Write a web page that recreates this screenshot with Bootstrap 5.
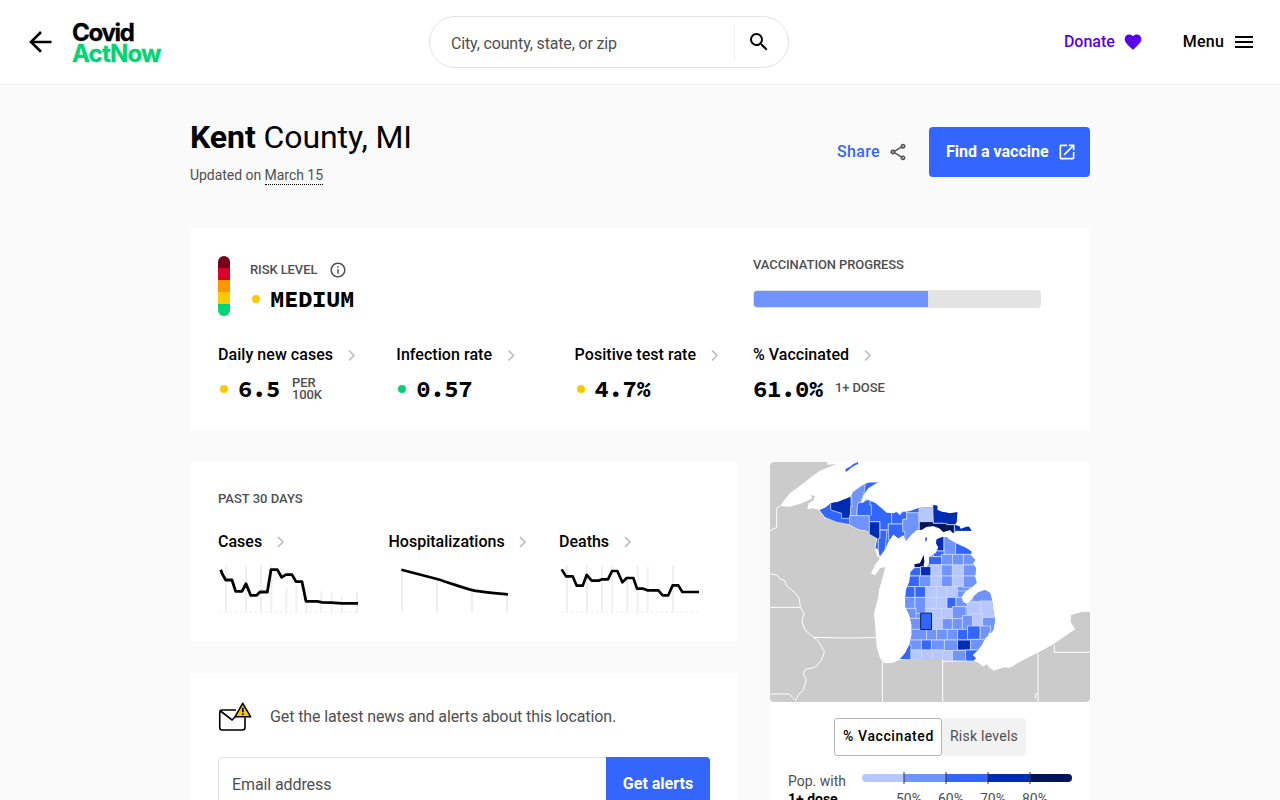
<!DOCTYPE html>
<html lang="en">
<head>
<meta charset="utf-8">
<meta name="viewport" content="width=device-width, initial-scale=1">
<title>Kent County, MI - Covid Act Now</title>
<link href="https://cdn.jsdelivr.net/npm/bootstrap@5.3.0/dist/css/bootstrap.min.css" rel="stylesheet">
<style>
body{font-family:Roboto,sans-serif;background:#fafafa;color:#000;font-size:16px;line-height:24px;height:800px;overflow:hidden}
svg{display:block;flex:none}
.topbar{height:85px;border-bottom:1px solid #f0f0f0}
.brand-side{width:429px;padding-left:28px}
.searchbox{width:360px;height:52px;border:1px solid #e3e3e3;border-radius:26px;padding-left:21px;color:#4f4f4f;letter-spacing:-.15px}
.search-btn{width:54px;height:38px;border-left:1px solid #f0f0f0;padding-left:12px}
.fw5{font-weight:500}
.menu-label{margin-left:40px;letter-spacing:.2px}
.donate{color:#5900ee}
.page{width:900px}
.panel{background:#fff;border-radius:4px}
.title{font-size:32px;line-height:40px;letter-spacing:-.08px}
.muted{color:#4f4f4f}
.updated{font-size:14px;margin-top:6px;letter-spacing:-.04px}
.dotted{border-bottom:1px dotted #000;padding-bottom:1px}
.share{color:#3366ff;letter-spacing:.35px}
.act{background:#3366ff;color:#fff;border-radius:4px}
.cta{width:161px;height:50px;padding-left:17px;margin-left:21px}
.summary{height:202px;padding:28px}
.cap{font-size:13px;line-height:16px;font-weight:500;color:#4f4f4f;letter-spacing:-.1px}
.num{font-family:"Source Code Pro","Liberation Mono",monospace;font-weight:700;font-size:24px;line-height:28px;letter-spacing:-.4px}
.pt{width:8px;height:8px;border-radius:50%;margin:0 10px 0 2px}
.amber{background:#ffc900}.green{background:#00d474}
.risk{width:12px;height:60px;border-radius:6px;overflow:hidden}
.risk div{height:12px}
.bar{width:288px;height:18px;background:#e3e3e3;border-radius:4px;padding:1px}
.bar div{height:16px;background:#6f93ff;border-radius:3px 0 0 3px}
.metric{width:178.3px;flex:none}
.metric .fw5{letter-spacing:.05px}
.value{margin-top:8px}
.trends{height:179px;padding:29px 28px 0}
.trend{width:170.5px;flex:none}
.trend>svg{margin-top:9px}
.left-col{width:548px}.right-col{width:320px}
.signup{height:180px;padding:28px}
.news{letter-spacing:-.11px;margin-left:17px}
.email{height:56px;border:1px solid #e3e3e3;border-right:0;border-radius:4px 0 0 4px;padding-left:13px;color:#4f4f4f;letter-spacing:-.1px}
.go{width:104px;height:56px;border-radius:0 4px 4px 0;background:#3366ff;color:#fff;font-weight:700;padding-bottom:2px}
.seg{width:192px;font-size:14px;height:38px;letter-spacing:.25px;margin-top:16px}
.seg>div{padding-bottom:2px}
.seg .on{width:108px;border:1px solid #b5b5b5;border-radius:3px;background:#fff;letter-spacing:.6px;padding-left:1px}
.seg .off{width:84px;background:#f2f2f2;border-radius:0 4px 4px 0;color:#4f4f4f}
.legend-row{font-size:14px;line-height:18px;padding:16px 18px 0}
.l{fill:#b7c7ff}.m{fill:#6f93ff}.b{fill:#3366ff}.d{fill:#002cb4}.k{fill:#001659}
.cty{stroke:#cddaff;stroke-width:2.4}
</style>
</head>
<body>
<header class="topbar bg-white d-flex align-items-center">
  <div class="brand-side d-flex align-items-center">
    <svg width="24" height="24" viewBox="0 0 24 24" fill="none" stroke="#000" stroke-width="2.6"><path d="M23.500 12H3M13 2 3 12l10 9.800"/></svg>
    <svg class="ms-3" width="100" height="50" viewBox="0 -2.500 100 50" font-family="Inter" font-weight="700" font-size="24" stroke-width=".3"><text x="4" y="21" textLength="63" stroke="#000">Covid</text><text x="4" y="42" textLength="89.500" fill="#00d474" stroke="#00d474">ActNow</text></svg>
  </div>
  <div class="searchbox d-flex align-items-center justify-content-between">
    <span class="pt-1" style="line-height:22px">City, county, state, or zip</span>
    <span class="search-btn d-flex align-items-center"><svg width="24" height="24" viewBox="0 0 24 24"><path d="M15.5 14h-.79l-.28-.27A6.47 6.47 0 0 0 16 9.5 6.5 6.5 0 1 0 9.5 16c1.61 0 3.09-.59 4.23-1.57l.27.28v.79l5 4.99L20.49 19l-4.99-5zm-6 0C7.01 14 5 11.99 5 9.5S7.01 5 9.5 5 14 7.01 14 9.5 11.99 14 9.5 14z"/></svg></span>
  </div>
  <nav class="ms-auto d-flex align-items-center fw5 pe-4">
    <span class="donate">Donate</span>
    <svg class="ms-2" width="20" height="20" viewBox="0 0 24 24" fill="#5900ee"><path d="m12 21.35-1.45-1.32C5.4 15.36 2 12.28 2 8.5 2 5.42 4.42 3 7.5 3c1.74 0 3.41.81 4.5 2.09C13.09 3.81 14.76 3 16.5 3 19.58 3 22 5.42 22 8.5c0 3.78-3.4 6.86-8.55 11.54z"/></svg>
    <span class="menu-label me-2">Menu</span>
    <svg width="24" height="24" viewBox="0 0 24 24"><path d="M3 18h18v-2H3v2zm0-5h18v-2H3v2zm0-7v2h18V6H3z"/></svg>
  </nav>
</header>

<main class="page mx-auto">
  <section class="d-flex justify-content-between" style="height:143px;padding-top:32px">
    <div>
      <h1 class="title fw-normal mb-0"><b class="fw-bold">Kent</b> County, MI</h1>
      <div class="muted updated">Updated on <span class="dotted">March 15</span></div>
    </div>
    <div class="d-flex align-items-center" style="height:50px;margin-top:10px">
      <span class="fw5 share">Share</span>
      <svg class="ms-2" width="20" height="20" viewBox="0 0 24 24" fill="#4f4f4f"><path d="M18 16.08c-.76 0-1.44.3-1.96.77L8.91 12.7c.05-.23.09-.46.09-.7s-.04-.47-.09-.7l7.05-4.11c.54.5 1.25.81 2.04.81 1.66 0 3-1.34 3-3s-1.34-3-3-3-3 1.34-3 3c0 .24.04.47.09.7L8.04 9.81C7.5 9.31 6.79 9 6 9c-1.66 0-3 1.34-3 3s1.34 3 3 3c.79 0 1.5-.31 2.04-.81l7.12 4.16c-.05.21-.08.43-.08.65 0 1.61 1.31 2.92 2.92 2.92s2.92-1.31 2.92-2.92-1.31-2.92-2.92-2.92zM18 4c.55 0 1 .45 1 1s-.45 1-1 1-1-.45-1-1 .45-1 1-1zM6 13c-.55 0-1-.45-1-1s.45-1 1-1 1 .45 1 1-.45 1-1 1zm12 7.02c-.55 0-1-.45-1-1s.45-1 1-1 1 .45 1 1-.45 1-1 1z"/></svg>
      <a class="act cta d-flex align-items-center fw-bold text-decoration-none">Find a vaccine
        <svg class="ms-2" width="20" height="20" viewBox="0 0 24 24" fill="#fff"><path d="M19 19H5V5h7V3H5c-1.11 0-2 .9-2 2v14c0 1.1.89 2 2 2h14c1.1 0 2-.9 2-2v-7h-2v7zM14 3v2h3.59l-9.83 9.83 1.41 1.41L19 6.41V10h2V3h-7z"/></svg></a>
    </div>
  </section>

  <section class="panel summary">
    <div class="d-flex" style="height:87px">
      <div class="risk"><div style="background:#790019"></div><div style="background:#d9002c"></div><div style="background:#ff9600"></div><div class="amber"></div><div class="green"></div></div>
      <div style="margin-left:20px;width:503px">
        <div class="d-flex align-items-center cap" style="height:28px">RISK LEVEL
          <svg style="margin-left:12px" width="18" height="18" viewBox="0 0 24 24" fill="#4f4f4f"><path d="M11 7h2v2h-2zm0 4h2v6h-2zm1-9C6.480 2 2 6.480 2 12s4.480 10 10 10 10-4.480 10-10S17.520 2 12 2zm0 18c-4.410 0-8-3.590-8-8s3.590-8 8-8 8 3.590 8 8-3.590 8-8 8z"/></svg></div>
        <div class="d-flex align-items-center" style="height:30px"><span class="pt amber"></span><span class="num">MEDIUM</span></div>
      </div>
      <div><div class="cap" style="padding-top:1px">VACCINATION PROGRESS</div><div class="bar" style="margin-top:17px"><div style="width:61%"></div></div></div>
    </div>
    <div class="d-flex">
      <div class="metric"><div class="fw5 d-flex align-items-center">Daily new cases<svg width="38" height="24"><path d="m16 7.500 5 5-5 5" fill="none" stroke="#bdbdbd" stroke-width="1.700"/></svg></div>
        <div class="d-flex align-items-center value"><span class="pt amber"></span><span class="num">6.5</span><span class="cap" style="line-height:12px;margin-left:12px">PER<br>100K</span></div></div>
      <div class="metric"><div class="fw5 d-flex align-items-center">Infection rate<svg width="38" height="24"><path d="m16.500 7.500 5 5-5 5" fill="none" stroke="#bdbdbd" stroke-width="1.700"/></svg></div>
        <div class="d-flex align-items-center value"><span class="pt green"></span><span class="num">0.57</span></div></div>
      <div class="metric"><div class="fw5 d-flex align-items-center">Positive test rate<svg width="38" height="24"><path d="m16 7.500 5 5-5 5" fill="none" stroke="#bdbdbd" stroke-width="1.700"/></svg></div>
        <div class="d-flex align-items-center value"><span class="pt amber"></span><span class="num">4.7%</span></div></div>
      <div class="metric"><div class="fw5 d-flex align-items-center">% Vaccinated<svg width="38" height="24"><path d="m16 7.500 5 5-5 5" fill="none" stroke="#bdbdbd" stroke-width="1.700"/></svg></div>
        <div class="d-flex align-items-center value"><span class="num">61.0%</span><span class="cap" style="margin-left:12px;margin-top:-3px">1+ DOSE</span></div></div>
    </div>
  </section>

  <div class="d-flex justify-content-between" style="margin-top:32px">
    <div class="left-col">
      <section class="panel trends">
        <div class="cap" style="margin-bottom:23px;letter-spacing:0">PAST 30 DAYS</div>
        <div class="d-flex">
          <div class="trend"><div class="fw5 d-flex">Cases<svg width="38" height="24"><path d="m16 7 5 5-5 5" fill="none" stroke="#bdbdbd" stroke-width="1.700"/></svg></div>
            <svg width="144" height="52"><g transform="translate(-28 -83) scale(.33333)" fill="none"><path d="M108 255V399M168 255V399M213 255V399M244 255V399M289 323V399M319 318V399M349 360V399M394 333V399M425 336V399M456 348V399M501 337V399" stroke="#f0f0f0" stroke-width="6"/><path d="M90 396H504" stroke="#f0f0f0" stroke-width="5" stroke-dasharray="6 9"/><path d="M92 269 98 284 107 300H126L137 334H156L168 311 182 346H200L210 336H232L243 269H262L275 292 288 284H306L318 305H336L348 364H382L396 367 425 368 455 370H504" stroke="#000" stroke-width="8.500" stroke-linejoin="round"/></g></svg></div>
          <div class="trend"><div class="fw5 d-flex">Hospitalizations<svg width="38" height="24"><path d="m15 7 5 5-5 5" fill="none" stroke="#bdbdbd" stroke-width="1.700"/></svg></div>
            <svg width="144" height="52"><g transform="translate(-199 -83) scale(.33333)" fill="none"><path d="M636 269V399M741 297V399M846 330V399M951 342V399" stroke="#f0f0f0" stroke-width="6"/><path d="M634 269 741 297C790 312 825 326 850 331S910 339 954 343" stroke="#000" stroke-width="8"/></g></svg></div>
          <div class="trend"><div class="fw5 d-flex">Deaths<svg width="38" height="24"><path d="m16 7 5 5-5 5" fill="none" stroke="#bdbdbd" stroke-width="1.700"/></svg></div>
            <svg width="144" height="52"><g transform="translate(-99 -83) scale(.33333)" fill="none"><path d="M321 255V399M381 255V399M426 255V399M457 255V399M502 289V399M533 255V399M563 260V399M639 255V399" stroke="#f0f0f0" stroke-width="6"/><path d="M303 396H718" stroke="#f0f0f0" stroke-width="5" stroke-dasharray="6 9"/><path d="M305 268 318 289H338L350 317H368L380 285 395 302H416L426 298H444L456 273H472L487 307 500 294H520L531 326H550L562 331H595L608 346H625L638 316H655L667 336H717" stroke="#000" stroke-width="8" stroke-linejoin="round"/></g></svg></div>
        </div>
      </section>
      <section class="panel signup" style="margin-top:32px">
        <div class="d-flex align-items-center muted" style="height:32px">
          <svg width="35" height="34" viewBox="0 -1.500 35 34" fill="none" stroke="#000" stroke-width="1.600"><path d="M18 8.500H4Q1.750 8.500 1.750 10.700V26Q1.750 28.500 4 28.500H24.500Q27 28.500 27 26V16M2.500 9.500 14 18.500 18 14.500"/><path d="M24.700 1.800 32.700 15.300H17Z" fill="#ffc900" stroke-linejoin="round"/><path d="M24.800 6.300V10.800M24.800 12V13.600" stroke-width="1.700"/></svg>
          <span class="news">Get the latest news and alerts about this location.</span></div>
        <div class="d-flex" style="margin-top:24px"><div class="email flex-grow-1 d-flex align-items-center">Email address</div><div class="go d-flex align-items-center justify-content-center">Get alerts</div></div>
      </section>
    </div>

    <section class="panel right-col overflow-hidden">
      <svg width="320" height="240" viewBox="0 0 320 240">
        <defs>
          <clipPath id="mapbox"><rect width="320" height="240" rx="4"/></clipPath>
          <clipPath id="lower"><path d="M198 68 205 52 198 40 200 28 215 22 228 20 240 30 262 42 290 55 305 65 302 75 316 90 309 100 318 115 315 140 320 158 305 172 285 185 275 200 278 215 290 222 300 215 310 200 325 187 345 180 360 188 366 210 370 240 375 270 370 300 362 310 355 305 355 316 345 325 335 345 322 362 308 375 318 385 310 392 90 387 105 370 118 345 125 315 125 285 118 255 106 230 106 205 108 180 118 155 122 125 135 113 133 103 150 100 161 75 163 95 160 110 170 112 177 100 178 80Z"/></clipPath>
          <clipPath id="upper"><path d="M148 150 165 143 182 130 205 125 243 110 250 95 270 80 285 72 300 67 325 67 310 75 295 85 280 105 272 130 280 128 290 118 300 122 315 128 335 145 350 158 370 160 380 157 390 166 398 155 410 155 422 152 447 143 490 142 488 135 502 137 502 150 515 155 540 160 562 157 560 185 554 195 568 199 572 207 590 200 597 200 605 212 590 212 558 212 550 220 540 210 520 216 508 205 490 198 470 200 455 209 440 210 425 222 408 242 400 225 385 235 370 223 355 245 345 268 330 290 325 268 316 265 322 235 300 222 295 212 265 207 238 193 200 185 165 172Z"/></clipPath>
        </defs>
        <g clip-path="url(#mapbox)">
          <g transform="translate(0 -2) scale(.33333)">
            <path fill="#cbcbcb" d="M0 0H165L175 14 200 12 150 32 125 50 100 70 60 100 45 118 30 138 60 140 95 130 125 116 124 105 135 108 130 122 116 130 112 148 130 145 148 150 165 172 238 193 265 207 295 212 322 235 316 265 325 290 330 295 315 315 303 340 315 346 330 325 345 320 340 345 336 360 327 390 325 410 312 460 318 530 320 560 330 595 345 610 370 608 392 597 518 598 610 602 625 608 640 620 650 612 656 622 672 632 700 622 720 623 735 614 760 600 800 580 850 553 890 525 915 508 902 485 903 465 935 456 960 455V740H0Z"/>
            <g fill="none" stroke="#fff" stroke-width="3" stroke-linejoin="round"><path d="M30 138 20 145V202L0 212M0 342 20 345 30 357 43 361 50 378 75 398 88 415 91 442 102 460 96 485 105 510 128 530 146 545 163 575 155 600 135 622 105 628 100 642 109 658 100 690 86 703 77 722 58 702H0M0 442H91M130 532 220 534 319 533M337 598V740M337 598H518V740M518 604 610 602M804 580V740M804 702H796V716M853 555V577H960"/><path d="M148 150 165 172 238 193 265 207 295 212 322 235 316 265 325 290" stroke-width="4"/></g>
            <path class="b" d="M225 32 230 25 240 20 250 12 264 6 265 11 250 19 240 26 230 35Z"/>
          </g>
          <g transform="translate(0 -2) scale(.33333)"><g clip-path="url(#upper)" class="cty">
            <path class="b" d="M140 60H620V300H140Z"/>
            <path class="d" d="M182 120 243 105V140L240 175H215V160L182 150Z"/>
            <path class="m" d="M243 100 286 70 283 95 272 125 263 130 260 167H242V140H247Z"/>
            <path class="b" d="M263 130 300 118V135H304V167H260Z"/>
            <path class="m" d="M239 167H298V215H239Z"/><path class="d" d="M298 185H330V240H298Z"/>
            <path class="b" d="M330 210H350V225L345 270 325 295V235H330ZM298 167V185H330V210H355V192H365V158"/>
            <path class="b" d="M365 155H410V178H398V192H365Z"/><path class="b" d="M355 192H405V240H355Z"/>
            <path class="m" d="M398 178H410V158H447V215L405 250V215H398Z"/>
            <path class="l" d="M447 140H490V185H447Z"/><path class="d" d="M488 130H610V220H555L553 194H520V190H490Z"/>
            <path class="k" d="M448 185H490V190H530V194H553V230H448Z"/>
          </g></g>
          <path class="b" d="m155 76 2-1v3l-1.500 2Z"/>
          <g transform="translate(100 68) scale(.33333)"><g clip-path="url(#lower)" class="cty" id="counties"></g>
            <path d="M152 249.500H184.500V298.500H152Z" class="b" stroke="#111c44" stroke-width="3"/></g>
        </g>
      </svg>
      <div class="seg d-flex mx-auto"><div class="on fw5 d-flex align-items-center justify-content-center">% Vaccinated</div><div class="off d-flex align-items-center justify-content-center">Risk levels</div></div>
      <div class="legend-row d-flex justify-content-between">
        <div class="muted">Pop. with<br><b class="text-black">1+ dose</b></div>
        <svg width="210" height="36" viewBox="0 -2 210 36"><defs><clipPath id="pill"><rect width="210" height="8" rx="4"/></clipPath></defs><g clip-path="url(#pill)"><path class="l" d="M0 0H42V8H0Z"/><path class="m" d="M42 0H84V8H42Z"/><path class="b" d="M84 0H126V8H84Z"/><path class="d" d="M126 0H168V8H126Z"/><path class="k" d="M168 0H210V8H168Z"/></g><path d="M42 -2V10M84 -2V10M126 -2V10M168 -2V10" stroke="#333" stroke-opacity=".65" stroke-width="1.500"/><g font-size="14" fill="#4f4f4f" text-anchor="middle"><text x="47" y="30">50%</text><text x="89" y="30">60%</text><text x="131" y="30">70%</text><text x="173" y="30">80%</text></g></svg>
      </div>
    </section>
  </div>
</main>
<script>
// County cells of the lower peninsula: class, left, top, right, bottom
const cells = `m 80 0 400 400
d 190 15 222 63|m 222 15 257 73|b 257 30 315 73|b 190 63 222 80
b 175 80 215 104|m 215 73 248 105|m 248 73 280 105|m 280 73 325 105|k 130 70 165 113
b 115 113 152 138|d 152 110 183 138|l 183 105 215 138|m 215 105 247 138|l 247 105 280 138|m 280 105 325 138
b 100 138 148 170|m 148 138 183 170|l 183 138 215 170|m 215 138 247 170|l 247 138 280 170|m 280 138 325 172
b 100 170 135 202|b 135 170 167 202|l 167 170 199 202|l 199 170 231 202|l 231 170 262 202|m 262 183 300 202
m 100 202 135 235|m 135 202 167 250|l 167 202 199 235|l 199 202 231 235|b 231 202 258 235|m 258 202 292 230
m 100 235 138 265|l 167 235 215 266|l 215 235 247 266|m 247 230 288 266|m 118 265 152 298|l 185 266 217 298
m 217 266 247 298|m 247 266 277 298|m 277 256 308 300|m 308 178 370 214|l 292 216 332 255|l 332 213 375 262|l 308 250 338 286|m 338 262 380 310
m 115 298 170 330|m 170 298 200 330|m 200 298 232 330|m 232 298 263 330|b 263 298 293 330|m 330 288 362 330|b 293 288 330 328
m 110 330 154 360|b 154 330 184 360|m 184 330 223 360|m 223 330 263 362|m 301 328 345 360|d 263 330 301 360
b 80 345 123 392|l 123 360 155 392|l 155 360 187 392|l 187 360 218 392|l 218 362 248 395|m 248 362 287 395|b 287 360 330 395`;
document.getElementById('counties').innerHTML = cells.split(/[|\n]/).map(c => {
  const [k, x, y, r, b] = c.split(' ');
  return `<rect class="${k}" x="${x}" y="${y}" width="${r - x}" height="${b - y}"/>`;
}).join('');
</script>
<script src="https://cdn.jsdelivr.net/npm/bootstrap@5.3.0/dist/js/bootstrap.bundle.min.js"></script>
</body>
</html>
